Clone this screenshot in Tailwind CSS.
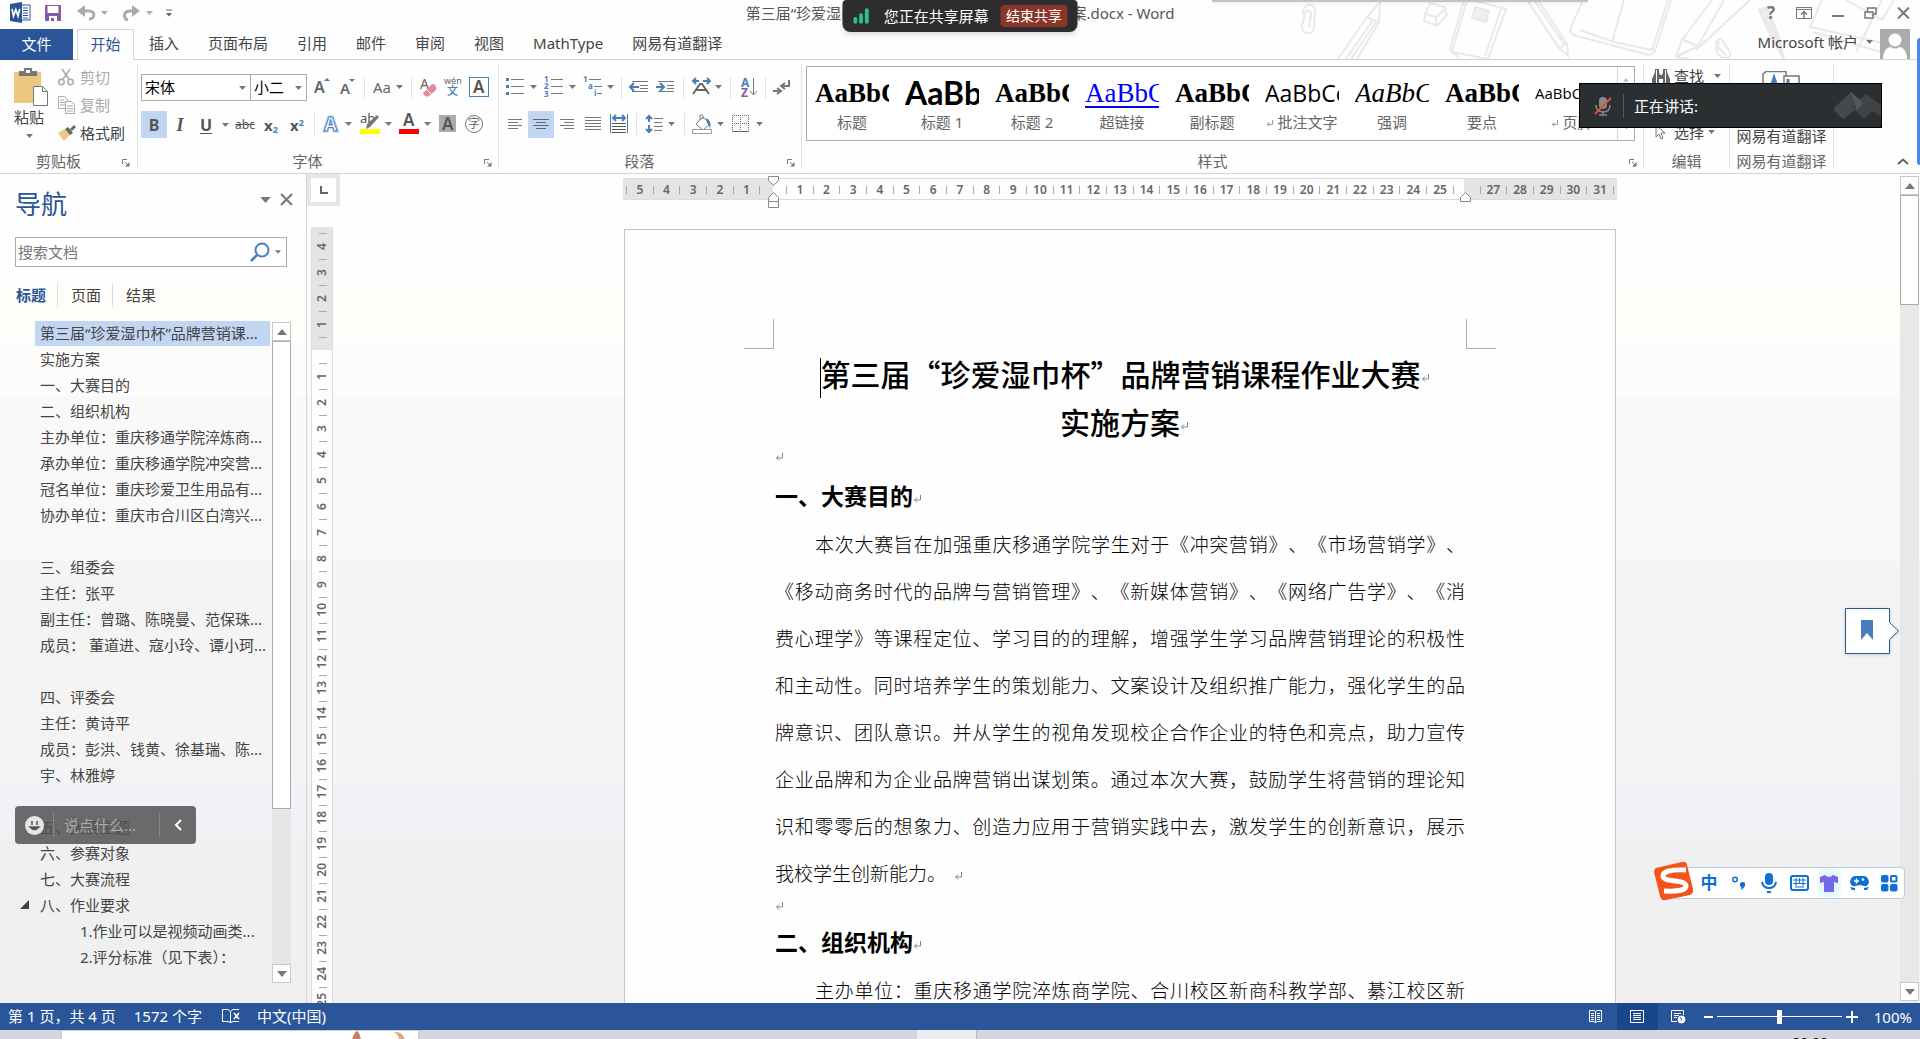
<!DOCTYPE html>
<html lang="zh-CN">
<head>
  <meta charset="UTF-8">
  <meta name="viewport" content="width=device-width, initial-scale=1.0">
  <title>第三届“珍爱湿巾杯”品牌营销课程作业大赛实施方案.docx - Word</title>
  <script src="https://cdn.jsdelivr.net/npm/@tailwindcss/browser@4"></script>
</head>
<body class="h-screen flex flex-col overflow-hidden bg-[#fefefe] font-['Noto_Sans','Noto_Sans_CJK_SC',sans-serif] text-[15px] leading-5 text-[#444]">

<!-- 公用图形 -->
<svg class="hidden">
  <symbol id="dd" viewBox="0 0 7 4" overflow="visible"><path d="M0 0h7L3.5 4z" fill="#777"/></symbol>
  <symbol id="launcher" viewBox="0 0 8 8"><path d="M.5 5V.5H5" fill="none" stroke="#777"/><path d="M3 3l3 3" stroke="#777"/><path d="M7.500 3v4.500H3z" fill="#777"/></symbol>
  <symbol id="pmark" viewBox="0 0 8 8"><path d="M7.500 0v5H1.500M4 2.500L1.500 5 4 7.500" fill="none" stroke="#888"/></symbol>
  <symbol id="tri" viewBox="0 0 10 6"><path d="M5 0l5 6H0z" fill="#777"/></symbol>
</svg>

<header class="relative shrink-0">
  <!-- 标题栏背景涂鸦 -->
  <svg class="absolute right-0 top-0 pointer-events-none" width="620" height="59" viewBox="1300 0 620 59" fill="none" stroke="#e9e9e9" stroke-width="2">
    <path d="M1303 14c-1-10 10-13 12-4l-1 18c-2 9-13 6-12-2l3-13c2-4 7-2 6 2l-2 12"/>
    <path d="M1338 59l29-42 13-15-1 20-22 37M1367 17l12 6M1346 59l27-39M1351 59l25-37"/>
    <path d="M1430 3l14 4 3 8-10 11-13-5 2-9zM1424 13l12 4 10-9M1436 17v9"/>
    <path d="M1464 0l-14 49 9 9M1467 0l-15 52 36 7 18-50-34-9M1502 6l-17 50"/><path d="M1475 7l14 4-3 11-14-4z" fill="#efefef"/>
    <path d="M1527 0l32 48 9 8-1-12-29-44M1559 48l8-5M1534 0l30 44"/>
    <path d="M1583 0l-12 27c-2 6 0 8 6 9l68 18c6 2 9 0 11-6l15-48M1580 30l34 12 38 8 16-50M1624 0l-12 42"/>
    <path d="M1690 59l-14-2 6-17 30-40M1724 0l-26 46-17-7M1698 46l-22 11M1750 0l-54 50"/>
    <path d="M1720 42c-6 4-3 14 2 15 6 2 10-1 8-5l-8-12c-4-3-8 3-5 6l9 9"/>
    <path d="M1759 10l8-3 12 30 5 22-12-20z" fill="#ececec"/>
    <path d="M1822 0l-12 27 100 22M1813 32l92 27M1846 0l36 20 12-20M1856 52l26-52"/>
  </svg>

  <div class="relative h-[29px] flex items-start">
    <div class="flex-1 flex items-center h-[26px] pl-[10px]">
      <button aria-label="Word"><svg width="22" height="22" viewBox="0 0 22 22"><path d="M10 3h10v15H10z" fill="#fff" stroke="#2a5699"/><path d="M13 6h5M13 8.500h5M13 11h5M13 13.500h5M13 16h5" stroke="#2a5699"/><path d="M0 2l12-2v21L0 19z" fill="#2a5699"/><path d="M2 7l1.500 7 2.300-6.500L8 14l1.700-7" fill="none" stroke="#fff" stroke-width="1.700"/></svg></button>
      <button class="ml-[13px]" aria-label="保存"><svg width="16" height="16" viewBox="0 0 16 16"><path d="M0 0h16v16H0z" fill="#8559a5"/><path d="M2.500 1h11v7h-11zM4 11h8v5H4z" fill="#fff"/><path d="M6 13h3v3H6z" fill="#8559a5"/></svg></button>
      <button class="ml-[16px]" aria-label="撤消"><svg width="32" height="16" viewBox="0 0 32 16"><path d="M3 6h9c7 0 6 8 0 8" fill="none" stroke="#aaa" stroke-width="3"/><path d="M8 0L0 6l8 6z" fill="#aaa"/><use href="#dd" x="24" y="6" width="7" height="4" opacity=".6"/></svg></button>
      <button class="ml-[13px]" aria-label="恢复"><svg width="32" height="16" viewBox="0 0 32 16"><path d="M14 6H8c-7 0-7 8-2 9" fill="none" stroke="#aaa" stroke-width="3"/><path d="M10 0l8 6-8 6z" fill="#aaa"/><use href="#dd" x="24" y="6" width="7" height="4" opacity=".6"/></svg></button>
      <button class="ml-[12px]" aria-label="自定义快速访问工具栏"><svg width="6" height="8" viewBox="0 0 6 8"><path d="M0 1h6" stroke="#666"/><path d="M0 4h6L3 7.500z" fill="#666"/></svg></button>
    </div>
    <h1 class="h-[26px] leading-[26px] whitespace-nowrap text-[#555]">第三届“珍爱湿巾杯”品牌营销课程作业大赛实施方案.docx - Word</h1>
    <div class="flex-1 flex items-center justify-end h-[26px] pr-[10px] gap-[20px]">
      <button class="text-[17px] font-bold text-[#777] w-[10px]" aria-label="帮助">?</button>
      <button aria-label="功能区显示选项"><svg width="16" height="12" viewBox="0 0 16 12" fill="none" stroke="#777"><path d="M.5.5h15v11H.5zM.5 2.500h15" stroke-width="1"/><path d="M8 11V4.500M5 7.500l3-3 3 3" stroke-width="1.500"/></svg></button>
      <button aria-label="最小化"><svg width="12" height="12" viewBox="0 0 12 12"><path d="M0 9h12" stroke="#777" stroke-width="2"/></svg></button>
      <button aria-label="还原"><svg width="13" height="12" viewBox="0 0 13 12" fill="none" stroke="#777" stroke-width="1.500"><path d="M1 5h8v6H1zM3.500 5V1H12v6H9"/></svg></button>
      <button aria-label="关闭"><svg width="13" height="12" viewBox="0 0 13 12" stroke="#777" stroke-width="2"><path d="M1 .5l11 11M12 .5l-11 11"/></svg></button>
    </div>
    <div class="absolute right-[332px] top-0 w-[376px] h-[2px] bg-[#c4c4c4] shadow"></div>
  </div>

  <div class="relative h-[31px] flex border-b border-[#d4d4d4]">
    <button class="w-[73px] h-[31px] pb-[2px] bg-[#2a5699] text-white">文件</button>
    <button class="ml-1 w-[57px] h-[31px] pb-[2px] bg-[#fefefe] border border-b-0 border-[#d4d4d4] text-[#2a5699]">开始</button>
    <nav class="ml-[15px] pb-[2px] flex items-center gap-[29px] whitespace-nowrap">
      <button>插入</button>
      <button>页面布局</button>
      <button>引用</button>
      <button>邮件</button>
      <button>审阅</button>
      <button>视图</button>
      <button>MathType</button>
      <button>网易有道翻译</button>
    </nav>
    <div class="ml-auto mr-[10px] flex items-center">
      <button class="flex items-center pb-[4px]">Microsoft 帐户<svg class="ml-2" width="7" height="4"><use href="#dd"/></svg></button>
      <svg class="ml-[7px]" width="30" height="30" viewBox="0 0 30 30"><path d="M0 0h30v30H0z" fill="#ababab"/><circle cx="15" cy="11" r="6.500" fill="#fff"/><path d="M3 30c0-8 4-12 8-12 2 2 6 2 8 0 4 0 8 4 8 12z" fill="#fff"/></svg>
    </div>
  </div>

  <!-- 屏幕共享提示 -->
  <div class="absolute z-20 top-0 left-1/2 -translate-x-1/2 h-8 w-[235px] flex items-center px-[10px] pb-px rounded-b-lg rounded-t-sm bg-[#2d2d2d] shadow-md text-white whitespace-nowrap">
    <svg class="mr-[14px]" width="18" height="16" viewBox="0 0 18 16" fill="#28c28b"><rect x="1" y="9" width="4" height="7" rx="2"/><rect x="7" y="5" width="4" height="11" rx="2"/><rect x="13" y="0" width="4" height="16" rx="2"/></svg>
    <span>您正在共享屏幕</span>
    <button class="ml-3 w-[70px] h-[22px] rounded bg-[#8a3529] text-[14px]">结束共享</button>
  </div>
</header>

<!-- 功能区 -->
<section class="relative shrink-0 h-[114px] flex border-b border-[#d4d4d4] whitespace-nowrap">
  <div class="w-[137px] flex flex-col">
    <div class="flex pt-[3px]">
      <button class="w-[56px] flex flex-col items-center pl-[6px] pt-[5px]">
        <svg width="36" height="38" viewBox="0 0 36 38"><path d="M1 4h27v31H1z" fill="#ecc87f"/><path d="M6 3h5V0h8v3h5v5H6z" fill="#777"/><path d="M13 2h4v3h-4z" fill="#fff"/><path d="M20.500 18.500h9l5 5v14h-14z" fill="#fff" stroke="#777"/><path d="M29.500 18.500v5h5" fill="none" stroke="#777"/></svg>
        <span class="mt-px -ml-1">粘贴</span>
        <svg class="mt-[7px] -ml-1" width="7" height="4"><use href="#dd"/></svg>
      </button>
      <div class="flex flex-col text-left">
        <button class="h-7 flex items-center gap-[6px] pl-[2px] text-[#aaa]"><svg width="16" height="18" viewBox="0 0 16 18" fill="none" stroke="#aaa" stroke-width="1.500"><circle cx="3.500" cy="14" r="2.700"/><circle cx="12.500" cy="14" r="2.700"/><path d="M4 1l7.500 11M12 1L4.500 12"/></svg>剪切</button>
        <button class="h-7 flex items-center gap-[4px] pl-[2px] text-[#aaa]"><svg width="18" height="18" viewBox="0 0 18 18" fill="#fefefe" stroke="#aaa"><path d="M.5.5h6l3 3v9h-9z"/><path d="M2 4h4M2 6.500h6M2 9h6"/><path d="M7.500 5.500h6l3 3v9h-9z"/><path d="M9 10h6M9 12.500h6M9 15h6"/></svg>复制</button>
        <button class="h-7 flex items-center gap-[4px] pl-[2px]"><svg width="18" height="16" viewBox="0 0 18 16"><path d="M0 8l7-4 5 6-6 6z" fill="#ecc87f"/><path d="M7 4l3-2 5 6-3 2zM12 4l4-4 2 2-4 4z" fill="#666"/></svg>格式刷</button>
      </div>
    </div>
    <div class="mt-auto h-[22px] relative text-center pr-5 text-[#666]">剪贴板<button class="absolute right-[7px] top-[8px]" aria-label="剪贴板选项"><svg width="8" height="8"><use href="#launcher"/></svg></button></div>
  </div>
  <i class="w-px my-1 bg-[#e1e1e1]"></i>

  <div class="w-[360px] pl-[3px] pt-[14px] flex flex-col">
    <div class="flex h-[27px]">
      <label class="relative"><select aria-label="字体" class="appearance-none w-[110px] h-[27px] pl-[3px] pb-px border border-[#ababab] bg-white text-black"><option>宋体</option></select><svg class="absolute right-[5px] top-3" width="7" height="4"><use href="#dd"/></svg></label>
      <label class="relative -ml-px"><select aria-label="字号" class="appearance-none w-[57px] h-[27px] pl-[3px] pb-px border border-[#ababab] bg-white text-black"><option>小二</option></select><svg class="absolute right-[5px] top-3" width="7" height="4"><use href="#dd"/></svg></label>
      <button aria-label="增大字号"><svg width="27" height="27" fill="#666"><text x="7" y="19" font-size="16" font-weight="600">A</text><path d="M17 7l3-3 3 3z" fill="#4a7ebb"/></svg></button>
      <button aria-label="减小字号"><svg width="26" height="27" fill="#666"><text x="6" y="20" font-size="15" font-weight="600">A</text><path d="M15 5h6l-3 3z" fill="#4a7ebb"/></svg></button>
      <i class="w-px h-[22px] mt-[3px] mx-1 bg-[#e1e1e1]"></i>
      <button aria-label="更改大小写"><svg width="38" height="27" fill="#666"><text x="4" y="19" font-size="15">Aa</text><use href="#dd" x="27" y="11" width="7" height="4"/></svg></button>
      <i class="w-px h-[22px] mt-[3px] mx-1 bg-[#e1e1e1]"></i>
      <button aria-label="清除格式"><svg width="25" height="27" fill="#666"><text x="4" y="15" font-size="14">A</text><path d="M7 19l8-8q2-2 4 0l1 2q1 2-1 4l-6 5q-2 1-4 0z" fill="#e58a9b"/><path d="M10 15l5 5" stroke="#fff"/></svg></button>
      <button aria-label="拼音指南"><svg width="25" height="27" fill="#666"><text x="3" y="10" font-size="9">wén</text><text x="6" y="21" font-size="11" fill="#4a7ebb" font-weight="500">文</text></svg></button>
      <button aria-label="字符边框"><svg width="26" height="27" fill="#555"><rect x="3.500" y="3.500" width="19" height="19" fill="none" stroke="#4a7ebb"/><text x="7" y="19" font-size="17" font-weight="600">A</text></svg></button>
    </div>
    <div class="flex h-[27px] mt-[10px] text-[#555]">
      <button class="w-[26px] bg-[#c2d5f2] font-bold text-[16px]">B</button>
      <button class="w-[26px] font-['Liberation_Serif',serif] font-bold italic text-[18px]">I</button>
      <button class="w-[39px] flex items-center pl-[7px] font-bold text-[16px]" aria-label="下划线"><span class="underline underline-offset-2">U</span><svg class="ml-[10px]" width="7" height="4"><use href="#dd"/></svg></button>
      <button class="w-[26px] text-[12px] line-through">abc</button>
      <button class="w-[26px] font-bold text-[15px]" aria-label="下标">x<sub class="text-[9px] text-[#4a7ebb]">2</sub></button>
      <button class="w-[26px] font-bold text-[15px]" aria-label="上标">x<sup class="text-[9px] text-[#4a7ebb]">2</sup></button>
      <i class="w-px h-[22px] mt-[2px] mx-1 bg-[#e1e1e1]"></i>
      <button aria-label="文本效果"><svg width="37" height="27"><text x="5" y="20" font-size="19" font-weight="700" fill="#fff" stroke="#b9d5ef" stroke-width="3">A</text><text x="5" y="20" font-size="19" font-weight="700" fill="#fff" stroke="#4a7ebb">A</text><use href="#dd" x="26" y="11" width="7" height="4"/></svg></button>
      <button aria-label="突出显示"><svg width="40" height="27"><text x="4" y="12" font-size="13" fill="#555">ab</text><path d="M11 13l10-9 2 2-9 10-4 2z" fill="#777"/><path d="M4 18h20v5H4z" fill="#ff0"/><use href="#dd" x="29" y="11" width="7" height="4"/></svg></button>
      <button aria-label="字体颜色"><svg width="39" height="27"><text x="7" y="15" font-size="17" font-weight="600" fill="#555">A</text><path d="M3 18h20v5H3z" fill="red"/><use href="#dd" x="28" y="11" width="7" height="4"/></svg></button>
      <button aria-label="字符底纹"><svg width="25" height="27"><path d="M4 4h17v17H4z" fill="#ababab"/><text x="7" y="19" font-size="17" font-weight="600" fill="#555">A</text></svg></button>
      <button aria-label="带圈字符"><svg width="28" height="27"><circle cx="14" cy="13" r="8.500" fill="none" stroke="#777"/><text x="8" y="17" font-size="12" fill="#666">字</text></svg></button>
    </div>
    <div class="mt-auto h-[22px] relative text-center pr-6 text-[#666]">字体<button class="absolute right-[6px] top-[8px]" aria-label="字体选项"><svg width="8" height="8"><use href="#launcher"/></svg></button></div>
  </div>
  <i class="w-px my-1 bg-[#e1e1e1]"></i>

  <div class="w-[302px] pl-[3px] pt-[14px] flex flex-col">
    <!-- 段落第一行 -->
    <div class="flex h-[27px]">
      <button aria-label="项目符号"><svg width="38" height="27"><path d="M4 4h3v3H4zM4 11h3v3H4zM4 18h3v3H4z" fill="#4a7ebb"/><path d="M9 5.500h13M9 12.500h13M9 19.500h13" stroke="#777"/><use href="#dd" x="28" y="11" width="7" height="4"/></svg></button>
      <button aria-label="编号"><svg width="39" height="27"><g fill="#4a7ebb" font-size="8" font-weight="700"><text x="4" y="8">1</text><text x="4" y="15">2</text><text x="4" y="23">3</text></g><path d="M11 5.500h12M11 12.500h12M11 19.500h12" stroke="#777"/><use href="#dd" x="29" y="11" width="7" height="4"/></svg></button>
      <button aria-label="多级列表"><svg width="40" height="27"><g fill="#4a7ebb" font-size="8" font-weight="700"><text x="4" y="8">1</text><text x="9" y="15">a</text><text x="15" y="22">i</text></g><path d="M10 5.500h12M15 12.500h8M18 19.500h5" stroke="#777"/><use href="#dd" x="28" y="11" width="7" height="4"/></svg></button>
      <i class="w-px h-[22px] mt-[3px] ml-[2px] mr-1 bg-[#e1e1e1]"></i>
      <button aria-label="减少缩进"><svg width="26" height="27"><path d="M6 7.500h16M14 11.500h8M14 14.500h8M6 17.500h16" stroke="#777"/><path d="M4 13h9M8 9l-4 4 4 4" stroke="#4a7ebb" stroke-width="2" fill="none"/></svg></button>
      <button aria-label="增加缩进"><svg width="27" height="27"><path d="M6 7.500h16M15 11.500h7M15 14.500h7M6 17.500h16" stroke="#777"/><path d="M4 13h8M8 9l4 4-4 4" stroke="#4a7ebb" stroke-width="2" fill="none"/></svg></button>
      <i class="w-px h-[22px] mt-[3px] mx-1 bg-[#e1e1e1]"></i>
      <button aria-label="中文版式"><svg width="38" height="27"><path d="M5 20l7-10h2l7 10M8 16h10" stroke="#666" stroke-width="2" fill="none"/><path d="M5 7h6M8 4L5 7l3 3M15 7h7M19 4l3 3-3 3" stroke="#4a7ebb" stroke-width="2" fill="none"/><use href="#dd" x="27" y="11" width="7" height="4"/></svg></button>
      <i class="w-px h-[22px] mt-[3px] mx-1 bg-[#e1e1e1]"></i>
      <button aria-label="排序"><svg width="26" height="27"><text x="6" y="13" font-size="12" font-weight="700" fill="#4a7ebb">A</text><text x="6" y="23" font-size="12" font-weight="700" fill="#8559a5">Z</text><path d="M18.500 4v16M15 17l3.500 4 3.500-4" stroke="#777" fill="none"/></svg></button>
      <i class="w-px h-[22px] mt-[3px] mx-1 bg-[#e1e1e1]"></i>
      <button aria-label="显示编辑标记"><svg width="26" height="27"><path d="M19 6v6h-7M15 9l-4 3 4 3M3 17h6M7 14l4 3-4 3" stroke="#777" stroke-width="2" fill="none"/></svg></button>
    </div>
    <div class="flex h-[27px] mt-[10px]">
      <button aria-label="左对齐"><svg width="26" height="27"><path d="M6 8.500h14M6 11.500h10M6 14.500h14M6 17.500h10" stroke="#777"/></svg></button>
      <button aria-label="居中" class="bg-[#c2d5f2]"><svg width="26" height="27"><path d="M5 8.500h16M8 11.500h10M5 14.500h16M8 17.500h10" stroke="#666"/></svg></button>
      <button aria-label="右对齐"><svg width="26" height="27"><path d="M6 8.500h14M10 11.500h10M6 14.500h14M10 17.500h10" stroke="#777"/></svg></button>
      <button aria-label="两端对齐"><svg width="26" height="27"><path d="M5 6.500h16M5 9.500h16M5 12.500h16M5 15.500h16M5 18.500h16" stroke="#777"/></svg></button>
      <button aria-label="分散对齐"><svg width="26" height="27"><path d="M4.500 3v19M21.500 3v19" stroke="#4a7ebb"/><path d="M7 7h12M10 4L7 7l3 3M16 4l3 3-3 3" stroke="#4a7ebb" stroke-width="2" fill="none"/><path d="M6 12.500h14M6 15.500h14M6 18.500h14M6 21.500h14" stroke="#555"/></svg></button>
      <i class="w-px h-[22px] mt-[2px] mx-1 bg-[#e1e1e1]"></i>
      <button aria-label="行距"><svg width="39" height="27"><path d="M8 5v6M8 14v7M5 8l3-3 3 3M5 18l3 3 3-3" stroke="#4a7ebb" stroke-width="2" fill="none"/><path d="M13 7.500h9M13 11.500h8M13 15.500h9M13 19.500h8" stroke="#777"/><use href="#dd" x="27" y="11" width="7" height="4"/></svg></button>
      <i class="w-px h-[22px] mt-[2px] mx-1 bg-[#e1e1e1]"></i>
      <button aria-label="底纹"><svg width="39" height="27"><path d="M7 13l7-7 7 7-7 6z" fill="#fff" stroke="#777"/><path d="M11 9V4.500q2-2 3 0V8" fill="none" stroke="#777"/><path d="M17 7q6 2 4 11-1-4-3-6z" fill="#4a7ebb"/><path d="M3.500 18.500h19v4h-19z" fill="#fff" stroke="#999"/><use href="#dd" x="28" y="11" width="7" height="4"/></svg></button>
      <button aria-label="边框"><svg width="39" height="27"><path d="M4.500 4v16M20.500 4v16M12.500 4v16M4 4.500h17M4 12.500h17" stroke="#666" stroke-dasharray="1 1" fill="none"/><path d="M4 20.500h17" stroke="#666"/><use href="#dd" x="28" y="11" width="7" height="4"/></svg></button>
    </div>
    <div class="mt-auto h-[22px] relative text-center pr-6 text-[#666]">段落<button class="absolute right-[6px] top-[8px]" aria-label="段落选项"><svg width="8" height="8"><use href="#launcher"/></svg></button></div>
  </div>
  <i class="w-px my-1 bg-[#e1e1e1]"></i>

  <div class="flex-1 min-w-0 pl-[4px] pr-[8px] pt-[6px] flex flex-col">
    <div class="h-[75px] flex border border-[#ababab] bg-white">
      <div id="styles" class="flex-1 min-w-0 flex overflow-hidden"></div>
      <div class="w-[17px] shrink-0 border-l border-[#d4d4d4] flex flex-col items-center justify-between py-[11px]">
        <svg width="6" height="4" viewBox="0 0 10 6" opacity=".5"><use href="#tri"/></svg>
        <svg width="7" height="4"><use href="#dd"/></svg>
      </div>
    </div>
    <div class="mt-auto h-[22px] relative text-center pr-4 text-[#666]">样式<button class="absolute -right-[2px] top-[8px]" aria-label="样式选项"><svg width="8" height="8"><use href="#launcher"/></svg></button></div>
  </div>
  <i class="w-px my-1 bg-[#e1e1e1]"></i>

  <div class="w-[85px] pl-[8px] pt-[2px] flex flex-col">
    <button class="h-7 flex items-center"><svg class="mr-[4px]" width="18" height="17" viewBox="0 0 18 17"><path d="M3 4V1h4v3l1 3h2l1-3V1h4v3l3 7v6h-7v-6H7v6H0v-6z" fill="#666"/><path d="M4.500 2v14M13.500 2v14" stroke="#fff"/></svg>查找<svg class="ml-[10px]" width="7" height="4"><use href="#dd"/></svg></button>
    <button class="h-7 flex items-center pl-[22px]">替换</button>
    <button class="h-7 flex items-center pl-[3px]"><svg class="mr-[7px]" width="12" height="16" viewBox="0 0 12 16"><path d="M1 1v12l3-3 2 5 2-1-2-5h4z" fill="#fff" stroke="#777"/></svg>选择<svg class="ml-[4px]" width="7" height="4"><use href="#dd"/></svg></button>
    <div class="mt-auto h-[22px] text-center pr-2 text-[#666]">编辑</div>
  </div>
  <i class="w-px my-1 bg-[#e1e1e1]"></i>

  <div class="w-[103px] pt-[11px] flex flex-col items-center">
    <button class="flex flex-col items-center">
      <svg width="38" height="38" viewBox="0 0 38 38"><path d="M4 .5h20v28H1V3z" fill="#fff" stroke="#777" stroke-width="1.500"/><path d="M22 5h15v28H16v-5h6z" fill="#fff" stroke="#777" stroke-width="1.500"/><path d="M7 22l5-15 5 15M9 17h7M26 8v8" stroke="#4a7ebb" stroke-width="3" fill="none"/></svg>
      <span class="mt-[17px]">网易有道翻译</span>
    </button>
    <div class="mt-auto h-[22px] text-[#666]">网易有道翻译</div>
  </div>
  <i class="w-px my-1 bg-[#e1e1e1]"></i>
  <div class="w-[86px] flex items-end justify-end pr-[11px] pb-[8px]"><button aria-label="折叠功能区"><svg width="12" height="7" viewBox="0 0 12 7"><path d="M1 6l5-4.500L11 6" fill="none" stroke="#666" stroke-width="2"/></svg></button></div>

  <div class="absolute right-0 -top-[22px] w-[3px] h-[127px] rounded-l bg-[#4a86ee]"></div>

  <!-- 会议发言浮窗 -->
  <div class="absolute z-10 right-[38px] top-[23px] w-[303px] h-[45px] flex items-center pl-[14px] bg-[#2b2f32] border border-black text-white">
    <svg width="18" height="20" viewBox="0 0 18 20"><rect x="5" y="1" width="8" height="12" rx="4" fill="#888"/><path d="M2 9q0 7 7 7t7-7M9 16v3M5 19h8" fill="none" stroke="#888" stroke-width="1.500"/><path d="M1 18L17 2" stroke="#e2503c" stroke-width="2"/></svg>
    <i class="w-px h-6 ml-[11px] mr-[10px] bg-[#55595c]"></i>
    正在讲话:
    <svg class="ml-auto" width="48" height="27" viewBox="0 0 48 27"><path d="M1 16L18 0l12 11L11 27q-3 0-10-9z" fill="#45494b"/><path d="M18 15L33 2l15 11v12l-8-6-9 8z" fill="#404446"/><path d="M18 0l12 11-6 7z" fill="#54585a"/></svg>
  </div>
</section>

<main class="flex-1 min-h-0 flex overflow-hidden bg-[linear-gradient(to_bottom,#fefefe_0_110px,#fffefa_110px_166px,#fcfcfb_166px_222px,#f9f9f9_222px_387px,#f4f4f4_387px_608px,#f0f2f5_608px_664px,#f0f0f0_664px)]">
  <!-- 导航窗格 -->
  <aside class="relative w-[307px] shrink-0 flex flex-col border-r border-[#d4d4d4]">
    <div class="h-[63px] shrink-0 flex items-center pl-[15px] pr-[13px] pb-[4px]">
      <h2 class="text-[26px] leading-8 text-[#2a5699]">导航</h2>
      <button class="ml-auto -mt-[8px]" aria-label="任务窗格选项"><svg width="11" height="6" viewBox="0 0 7 4"><use href="#dd"/></svg></button>
      <button class="ml-[9px] -mt-[8px]" aria-label="关闭"><svg width="13" height="13" viewBox="0 0 13 13"><path d="M1 1l11 11M12 1L1 12" stroke="#777" stroke-width="2"/></svg></button>
    </div>
    <div class="relative ml-[15px] mr-[19px] shrink-0">
      <input type="text" aria-label="搜索文档" placeholder="搜索文档" class="block w-full h-[30px] border border-[#ababab] bg-white pl-[2px] placeholder:text-[#777]">
      <svg class="absolute right-[5px] top-[5px]" width="32" height="20" viewBox="0 0 32 20"><circle cx="12" cy="8" r="6.500" fill="none" stroke="#4a7ebb" stroke-width="2"/><path d="M7 13l-6 6" stroke="#4a7ebb" stroke-width="2.500"/><use href="#dd" x="25" y="8" width="6" height="4"/></svg>
    </div>
    <div class="h-[53px] shrink-0 flex items-center pl-[16px] pt-[2px]">
      <button class="font-bold text-[#2a5699]">标题</button>
      <i class="w-px h-6 ml-[11px] mr-[13px] bg-[#dcdcdc]"></i>
      <button>页面</button>
      <i class="w-px h-6 ml-[11px] mr-[13px] bg-[#dcdcdc]"></i>
      <button>结果</button>
    </div>
    <div class="flex-1 min-h-0 flex">
      <ul id="outline" class="w-[270px] overflow-hidden whitespace-pre"></ul>
      <div class="ml-[2px] mt-[2px] mb-[20px] w-[19px] flex flex-col bg-[#e6e6e6]">
        <button class="h-[19px] shrink-0 border border-[#c8c8c8] bg-white flex items-center justify-center" aria-label="向上"><svg width="10" height="6"><use href="#tri"/></svg></button>
        <div class="h-[468px] border border-[#ababab] bg-white"></div>
        <button class="mt-auto h-[19px] shrink-0 border border-[#c8c8c8] bg-white flex items-center justify-center" aria-label="向下"><svg class="rotate-180" width="10" height="6"><use href="#tri"/></svg></button>
      </div>
    </div>
    <!-- 聊天输入浮条 -->
    <div class="absolute left-[15px] bottom-[159px] w-[181px] h-[38px] flex items-center rounded bg-[#505254]/85 text-[#aaa]">
      <svg class="ml-[10px]" width="19" height="19" viewBox="0 0 19 19"><circle cx="9.500" cy="9.500" r="9.500" fill="#e6e6e6"/><path d="M7 5v4M12 5v4M5 11q4.500 5 9 0z" fill="#555" stroke="#555" stroke-width="1.500"/></svg>
      <i class="w-px h-6 ml-[9px] bg-[#888]"></i>
      <span class="ml-[10px] whitespace-nowrap">说点什么...</span>
      <i class="w-px h-6 ml-auto bg-[#888]"></i>
      <button class="w-[36px] flex justify-center" aria-label="收起"><svg width="8" height="12" viewBox="0 0 8 12"><path d="M7 1L2 6l5 5" fill="none" stroke="#fff" stroke-width="2"/></svg></button>
    </div>
  </aside>

  <!-- 垂直标尺 -->
  <div class="w-[33px] shrink-0 flex flex-col">
    <div class="w-[33px] h-[32px] shrink-0 border-4 border-[#e6e6e6] bg-white flex items-center justify-center"><i class="w-2 h-2 border-l-2 border-b-2 border-[#666]"></i></div>
    <div id="vruler" class="mt-[21px] ml-1 w-[22px] flex-1 min-h-0 overflow-hidden pt-[6px] border-x border-[#dcdcdc] bg-[linear-gradient(to_bottom,#e4e4e4_0_123px,#fefefe_123px)]"></div>
  </div>

  <div class="flex-1 min-w-0 flex flex-col items-center">
    <div class="relative mt-1 shrink-0">
      <div id="hruler" class="w-[994px] h-[22px] px-[3px] pt-px flex items-center border-y border-[#dcdcdc] bg-[linear-gradient(to_right,#e4e4e4_0_150px,#fefefe_150px_841px,#e4e4e4_841px)]"></div>
      <svg class="absolute left-[145px] -top-[2px]" width="11" height="33" viewBox="0 0 11 33" fill="#fff" stroke="#888"><path d="M.5.5h10v4l-5 5-5-5zM5.500 16.500l5 5v4H.5v-4zM.5 25.500h10v6H.5z"/></svg>
      <svg class="absolute left-[837px] top-[14px]" width="11" height="11" viewBox="0 0 11 11" fill="#fff" stroke="#888"><path d="M5.500.5l5 5v4H.5v-4z"/></svg>
    </div>

    <!-- 文档页面 -->
    <article class="relative mt-[29px] w-[992px] flex-1 min-h-0 overflow-hidden border border-b-0 border-[#c6c6c6] bg-[#fefefe] px-[150px] pt-[120px] font-['Noto_Sans_CJK_SC',sans-serif] text-black [text-spacing-trim:space-all]">
      <i class="absolute left-[119px] top-[89px] w-[30px] h-[30px] border-r border-b border-[#aaa]"></i>
      <i class="absolute right-[119px] top-[89px] w-[30px] h-[30px] border-l border-b border-[#aaa]"></i>
      <h2 class="text-center text-[30px] leading-[46px] font-medium whitespace-nowrap"><span class="inline-block align-middle w-px h-[40px] bg-black"></span>第三届“珍爱湿巾杯”品牌营销课程作业大赛<svg class="inline -mr-2" width="8" height="8"><use href="#pmark"/></svg><br>实施方案<svg class="inline -mr-2" width="8" height="8"><use href="#pmark"/></svg></h2>
      <p class="h-[26px] flex items-center"><svg width="8" height="8"><use href="#pmark"/></svg></p>
      <h3 class="text-[23px] leading-[50px] font-bold">一、大赛目的<svg class="inline" width="8" height="8"><use href="#pmark"/></svg></h3>
      <p class="indent-[40px] text-[19px] leading-[47px] font-light whitespace-nowrap text-justify [text-align-last:justify]">本次大赛旨在加强重庆移通学院学生对于《冲突营销》、《市场营销学》、<br>《移动商务时代的品牌与营销管理》、《新媒体营销》、《网络广告学》、《消<br>费心理学》等课程定位、学习目的的理解，增强学生学习品牌营销理论的积极性<br>和主动性。同时培养学生的策划能力、文案设计及组织推广能力，强化学生的品<br>牌意识、团队意识。并从学生的视角发现校企合作企业的特色和亮点，助力宣传<br>企业品牌和为企业品牌营销出谋划策。通过本次大赛，鼓励学生将营销的理论知<br>识和零零后的想象力、创造力应用于营销实践中去，激发学生的创新意识，展示<span class="block indent-0 [text-align-last:left]">我校学生创新能力。<svg class="inline ml-2" width="8" height="8"><use href="#pmark"/></svg></span></p>
      <p class="h-[20px] flex items-center"><svg width="8" height="8"><use href="#pmark"/></svg></p>
      <h3 class="text-[23px] leading-[50px] font-bold">二、组织机构<svg class="inline" width="8" height="8"><use href="#pmark"/></svg></h3>
      <p class="indent-[40px] text-[19px] leading-[47px] font-light whitespace-nowrap text-justify [text-align-last:justify]">主办单位：重庆移通学院淬炼商学院、合川校区新商科教学部、綦江校区新</p>
    </article>
  </div>

  <div class="w-[20px] shrink-0 flex flex-col mt-[2px] mb-[2px] pr-px">
    <button class="h-[19px] shrink-0 border border-[#c8c8c8] bg-white flex items-center justify-center" aria-label="向上"><svg width="10" height="6"><use href="#tri"/></svg></button>
    <div class="h-[110px] shrink-0 border border-[#ababab] bg-white"></div>
    <div class="flex-1 bg-[#e8e8e8]"></div>
    <button class="h-[19px] shrink-0 border border-[#c8c8c8] bg-white flex items-center justify-center" aria-label="向下"><svg class="rotate-180" width="10" height="6"><use href="#tri"/></svg></button>
  </div>
</main>

<footer class="relative shrink-0 h-[27px] pb-[2px] flex items-center bg-[#2a5699] text-white whitespace-nowrap">
  <span class="ml-2">第 1 页，共 4 页</span>
  <span class="ml-[18px]">1572 个字</span>
  <svg class="ml-[20px] mr-[17px]" width="18" height="14" viewBox="0 0 18 14" fill="none" stroke="#fff"><path d="M8.500 2.500L6 .5H.5v12H6l2.500 1zM8.500 2.500L11 .5h6M8.500 13.500l2.500-1h6"/><path d="M12 4l5 6M17 4l-5 6" stroke-width="1.500"/></svg>
  <span>中文(中国)</span>
  <div class="ml-auto flex items-center h-[27px] -mb-[2px]">
    <button aria-label="阅读视图" class="mr-[15px]"><svg width="13" height="13" viewBox="0 0 13 13" fill="none" stroke="#fff"><path d="M6.500 1.500L5 .5H.5v11H5l1.500 1.500L8 11.500h4.500V.5H8zv11M2 3.500h3M2 5.500h3M2 7.500h3M8 3.500h3M8 5.500h3M8 7.500h3M2 9.500h3M8 9.500h3"/></svg></button>
    <button aria-label="页面视图" class="w-[41px] h-full bg-[#19478a] flex items-center justify-center"><svg width="14" height="13" viewBox="0 0 14 13" fill="none" stroke="#fff"><path d="M.5.5h13v12H.5zM3 3.500h8M3 5.500h8M3 7.500h8M3 9.500h8"/></svg></button>
    <button aria-label="Web 版式视图" class="ml-[13px]"><svg width="15" height="14" viewBox="0 0 15 14" fill="none" stroke="#fff"><path d="M6 11.500H.5V.5h12V5M3 3.500h7M3 5.500h5M3 7.500h3"/><circle cx="10.500" cy="9.500" r="3.500" fill="#fff"/><path d="M9 7.500q3 1 1 3" stroke="#2a5699"/></svg></button>
    <button aria-label="缩小" class="ml-[18px]"><svg width="9" height="2"><path d="M0 1h9" stroke="#fff" stroke-width="2"/></svg></button>
    <input type="range" aria-label="显示比例" min="0" max="100" value="50" class="mx-[4px] appearance-none w-[125px] h-[14px] bg-[linear-gradient(#fff,#fff)] bg-[length:100%_1px] bg-center bg-no-repeat [&::-webkit-slider-thumb]:appearance-none [&::-webkit-slider-thumb]:w-[5px] [&::-webkit-slider-thumb]:h-[14px] [&::-webkit-slider-thumb]:bg-white">
    <button aria-label="放大"><svg width="12" height="12"><path d="M0 6h12M6 0v12" stroke="#fff" stroke-width="2"/></svg></button>
    <span class="ml-[16px] mr-[8px]">100%</span>
  </div>
</footer>

<!-- 任务栏 -->
<div class="shrink-0 h-[9px] flex overflow-hidden bg-[#d6d4df] text-black">
  <div class="ml-[61px] w-[358px] border border-b-0 border-[#ccc] bg-white flex">
    <svg class="ml-auto mr-3" width="56" height="9" viewBox="0 0 56 9"><path d="M2 9q2-8 5-9 3 2 4 9z" fill="#c08560"/><path d="M44 1q9-1 11 8h-6q0-5-5-8z" fill="#dca888"/></svg>
  </div>
  <div class="ml-[498px] w-[60px] bg-[#ededf2] border-r border-[#bbb]"></div>
  <span class="ml-auto mr-[92px] mt-[5px] text-[14px] leading-4">20:00</span>
</div>

<!-- 书签提示 -->
<button aria-label="回到上次阅读位置" class="fixed right-[20px] top-[608px] drop-shadow">
  <svg width="55" height="47" viewBox="0 0 55 47"><path d="M.5.5h44v14l9 8.500-9 8.500v14H.5z" fill="#fff" stroke="#2a5699"/><path d="M16 12h12v20l-6-7-6 7z" fill="#4a7ebb"/></svg>
</button>

<!-- 输入法工具条 -->
<div class="fixed right-[15px] top-[867px] w-[232px] h-[32px] grid grid-cols-7 place-items-center pl-[20px] bg-white border border-[#b9cde8] rounded-sm">
  <svg class="absolute -left-[21px] -top-[7px]" width="41" height="40" viewBox="0 0 41 40"><path d="M3 7L29 1q4-1 5 3l6 24q1 4-3 6l-24 5q-5 1-6-4L1 11q0-3 2-4z" fill="#f2541b"/><path d="M33 9Q10 8 10 15q0 4 12 5 11 1 11 5 0 6-22 5" fill="none" stroke="#fff" stroke-width="5"/></svg>
  <button class="text-[17px] font-bold text-[#0f6fd6]">中</button>
  <button aria-label="标点"><svg width="16" height="14" viewBox="0 0 16 14"><circle cx="4" cy="3.500" r="2.300" fill="none" stroke="#0f6fd6" stroke-width="1.500"/><path d="M9 7q3-2 5 0 1 4-4 7 1-3-1-4z" fill="#0f6fd6"/></svg></button>
  <button aria-label="语音"><svg width="16" height="20" viewBox="0 0 16 20"><rect x="4" y="0" width="8" height="12" rx="4" fill="#0f6fd6"/><path d="M1 9q1 6 7 6t7-6M6 19h4" fill="none" stroke="#0f6fd6" stroke-width="2"/></svg></button>
  <button aria-label="软键盘"><svg width="19" height="16" viewBox="0 0 19 16" fill="none" stroke="#0f6fd6"><rect x="1" y="1" width="17" height="14" rx="2" stroke-width="2"/><path d="M3 5h13M3 8.500h13M6 3v8M9.500 3v6M13 3v8M5 12h9" stroke-width="1"/></svg></button>
  <button aria-label="皮肤" class="h-[30px] w-[24px] flex items-center justify-center bg-[radial-gradient(#f3dcfb,#e4fafa_60%,#fff)]"><svg width="18" height="17" viewBox="0 0 18 17"><path d="M0 2l5-2q4 4 8 0l5 2v6l-4-1v10H4V7L0 8z" fill="#7468ea"/></svg></button>
  <button aria-label="游戏"><svg width="19" height="16" viewBox="0 0 19 16"><path d="M5 1h9q4 0 5 6-1 5-5 4l-4-1-5 1q-4 1-5-4 1-6 5-6zM0 12l5 1v2H2zM19 12l-5 1v2h3z" fill="#0f6fd6"/><path d="M4 6h5M6.500 3.500v5" stroke="#fff" stroke-width="1.500"/><circle cx="13" cy="4.500" r="1.300" fill="#fff"/></svg></button>
  <button aria-label="工具箱"><svg width="17" height="17" viewBox="0 0 17 17" fill="#0f6fd6"><rect width="7.500" height="7.500" rx="2"/><rect y="9" width="7.500" height="7.500" rx="2"/><rect x="9" y="9" width="7.500" height="7.500" rx="2"/><rect x="10" y="1" width="5.500" height="5.500" rx="1" fill="none" stroke="#0f6fd6" stroke-width="2"/></svg></button>
</div>

<script>
  const outline = [
    '第三届“珍爱湿巾杯”品牌营销课...', '实施方案', '一、大赛目的', '二、组织机构',
    '主办单位：重庆移通学院淬炼商...', '承办单位：重庆移通学院冲突营...', '冠名单位：重庆珍爱卫生用品有...', '协办单位：重庆市合川区白湾兴...',
    '', '三、组委会', '主任：张平', '副主任：曾璐、陈晓曼、范保珠...', '成员： 董道进、寇小玲、谭小珂...',
    '', '四、评委会', '主任：黄诗平', '成员：彭洪、钱黄、徐基瑞、陈...', '宇、林雅婷',
    '', '五、大赛主题', '六、参赛对象', '七、大赛流程', '八、作业要求', '1.作业可以是视频动画类...', '2.评分标准（见下表）：'
  ];
  const list = document.getElementById('outline');
  outline.forEach((text, i) => {
    const li = document.createElement('li');
    li.className = 'relative h-[26px] pt-px pl-[35px]';
    let cls = 'block w-full h-[25px] pb-[2px] text-left pl-[5px]';
    if (i === 0) cls = 'block w-full h-[25px] pb-[2px] text-left pl-[5px] bg-[#c2d5f2]';
    if (i > 22) cls = 'block w-full h-[25px] pb-[2px] text-left pl-[45px]';
    const arrow = i === 22 ? '<svg class="absolute left-[20px] top-[8px]" width="9" height="9"><path d="M9 0v9H0z" fill="#444"/></svg>' : '';
    li.innerHTML = arrow + `<button class="${cls}">${text}</button>`;
    list.appendChild(li);
  });

  // 标尺刻度，0 处不显示数字
  const vr = document.getElementById('vruler');
  for (let n = -4; n <= 25; n++) {
    vr.insertAdjacentHTML('beforeend', `<div class="relative h-[26px] flex items-center justify-center text-[12px] font-semibold text-[#666]"><i class="absolute top-0 left-[7px] w-[8px] h-px bg-[#aaa]"></i><span class="[writing-mode:vertical-rl] rotate-180">${n ? Math.abs(n) : ''}</span></div>`);
  }
  const hr = document.getElementById('hruler');
  for (let n = -5; n <= 31; n++) {
    hr.insertAdjacentHTML('beforeend', `<div class="flex-1 h-[8px] leading-[8px] text-center border-l border-[#aaa] text-[12px] font-semibold text-[#666]">${n && n !== 26 ? Math.abs(n) : ''}</div>`);
  }
  hr.insertAdjacentHTML('beforeend', '<i class="w-px h-[8px] bg-[#aaa]"></i>');

  const styles = [
    ['AaBbC', '标题', "font-['Liberation_Serif',serif] font-bold text-[27px] text-black"],
    ['AaBb', '标题 1', "font-['Lato',sans-serif] font-bold text-[32px] text-black"],
    ['AaBbC', '标题 2', "font-['Liberation_Serif',serif] font-bold text-[27px] text-black"],
    ['AaBbC', '超链接', "font-['Liberation_Serif',serif] text-[27px] text-[#0000ff] underline underline-offset-4"],
    ['AaBbC', '副标题', "font-['Liberation_Serif',serif] font-bold text-[27px] text-black"],
    ['AaBbCc', '批注文字', "font-['Open_Sans',sans-serif] text-[23px] text-black"],
    ['AaBbC', '强调', "font-['Liberation_Serif',serif] italic text-[27px] text-black"],
    ['AaBbC', '要点', "font-['Liberation_Serif',serif] font-bold text-[27px] text-black"],
    ['AaBbCc', '页脚', "font-['Open_Sans',sans-serif] text-[15px] text-black"]
  ];
  const gallery = document.getElementById('styles');
  styles.forEach(([sample, name, font]) => {
    const mark = name === '批注文字' || name === '页脚' ? '<svg class="inline mr-1" width="7" height="7" viewBox="0 0 8 8"><use href="#pmark"/></svg>' : '';
    gallery.insertAdjacentHTML('beforeend', `<button class="w-[90px] shrink-0 px-2 flex flex-col"><span class="block w-[74px] h-[44px] leading-[52px] overflow-hidden text-left ${font}">${sample}</span><span class="block w-full text-center mt-px text-[#666]">${mark}${name}</span></button>`);
  });
</script>
</body>
</html>
